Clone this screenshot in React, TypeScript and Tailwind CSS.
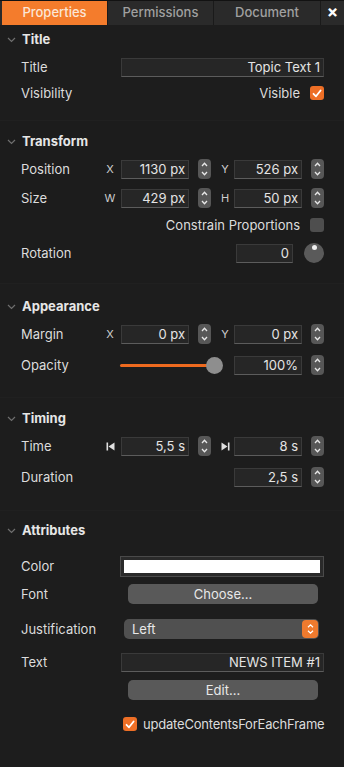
import React from 'react';

const font = { fontFamily: 'Inter, "Noto Sans", sans-serif' };

const Chevron = () => (
  <svg width="9" height="6" viewBox="0 0 9 6" className="mr-[6px]">
    <path d="M1 1 L4.5 4.5 L8 1" stroke="#6f6f6f" strokeWidth="1.2" fill="none" />
  </svg>
);

const Header: React.FC<{ title: string }> = ({ title }) => (
  <div className="h-[24px] flex items-center pl-[7px] pt-[3px]">
    <Chevron />
    <span className="text-[13px] font-bold text-[#e6e6e6]">{title}</span>
  </div>
);

const Stepper: React.FC<{ orange?: boolean }> = ({ orange }) => (
  <div className={`w-[13px] h-[20px] rounded-[4px] flex flex-col items-center justify-between py-[3px] ${orange ? 'bg-[#ee7a2e]' : 'bg-[#575757]'}`}>
    <svg width="7" height="5" viewBox="0 0 7 5">
      <path d="M1 4 L3.5 1.2 L6 4" stroke="#e8e8e8" strokeWidth="1.3" fill="none" />
    </svg>
    <svg width="7" height="5" viewBox="0 0 7 5">
      <path d="M1 1 L3.5 3.8 L6 1" stroke="#e8e8e8" strokeWidth="1.3" fill="none" />
    </svg>
  </div>
);

const Field: React.FC<{ value: string; w: string }> = ({ value, w }) => (
  <div className={`${w} h-[19px] bg-[#262626] border border-[#3a3a3a] border-b-[#5c5c5c] flex items-center justify-end pr-[3px] pt-[1px] text-[13px] text-[#e4e4e4]`}>
    {value}
  </div>
);

const Label: React.FC<{ children: React.ReactNode }> = ({ children }) => (
  <span className="text-[13px] text-[#dcdcdc] pt-[2px]">{children}</span>
);

const Mini: React.FC<{ children: React.ReactNode }> = ({ children }) => (
  <div className="w-[10px] flex justify-center text-[11px] text-[#cfcfcf] pt-[1px]">{children}</div>
);

const Pair: React.FC<{ a: React.ReactNode; b: React.ReactNode; va: string; vb: string }> = ({ a, b, va, vb }) => (
  <div className="flex items-center">
    <Mini>{a}</Mini>
    <div className="ml-[6px]"><Field value={va} w="w-[68px]" /></div>
    <div className="ml-[9px]"><Stepper /></div>
    <div className="ml-[9px]"><Mini>{b}</Mini></div>
    <div className="ml-[4px]"><Field value={vb} w="w-[68px]" /></div>
    <div className="ml-[9px]"><Stepper /></div>
  </div>
);

const Row: React.FC<{ label?: string; className?: string; children?: React.ReactNode }> = ({ label, className, children }) => (
  <div className={`h-[20px] flex items-center pl-[21px] pr-[20px] ${className ?? ''}`}>
    {label && <Label>{label}</Label>}
    <div className="flex-1" />
    {children}
  </div>
);

const Check: React.FC<{ on: boolean }> = ({ on }) =>
  on ? (
    <div className="w-[14px] h-[14px] shrink-0 rounded-[3px] bg-[#ee6f26] flex items-center justify-center">
      <svg width="10" height="9" viewBox="0 0 10 9">
        <path d="M1.5 4.8 L4 7.3 L8.6 1.5" stroke="#fff" strokeWidth="1.8" fill="none" strokeLinecap="round" strokeLinejoin="round" />
      </svg>
    </div>
  ) : (
    <div className="w-[14px] h-[14px] shrink-0 rounded-[3px] bg-[#4e4e4e]" />
  );

const SkipStart = () => (
  <svg width="9" height="9" viewBox="0 0 9 9">
    <rect x="0.5" y="0.5" width="1.6" height="8" fill="#e0e0e0" />
    <path d="M8.5 0.5 L2.5 4.5 L8.5 8.5 Z" fill="#e0e0e0" />
  </svg>
);

const SkipEnd = () => (
  <svg width="9" height="9" viewBox="0 0 9 9">
    <path d="M0.5 0.5 L6.5 4.5 L0.5 8.5 Z" fill="#e0e0e0" />
    <rect x="6.9" y="0.5" width="1.6" height="8" fill="#e0e0e0" />
  </svg>
);

export default function App() {
  return (
    <div className="w-[344px] h-[767px] bg-[#1d1d1d] overflow-hidden" style={font}>
      <div className="h-[25px] flex bg-[#2a2a2a] border-t border-[#121212] pl-[2px]">
        <div className="w-[105px] bg-[#f47c2c] flex items-center justify-center text-[13px] font-medium text-[#fbe6d6]">Properties</div>
        <div className="w-[106px] border-l border-[#1a1a1a] flex items-center justify-center text-[13px] font-medium text-[#a0a0a0]">Permissions</div>
        <div className="w-[107px] border-l border-[#1a1a1a] flex items-center justify-center text-[13px] font-medium text-[#a0a0a0]">Document</div>
        <div className="flex-1 border-l border-[#1a1a1a] flex items-center justify-center text-[17px] font-bold text-white">×</div>
      </div>

      <div className="pt-[1px] pb-[17px]">
        <Header title="Title" />
        <Row label="Title" className="mt-[7px]">
          <Field value="Topic Text 1" w="w-[203px]" />
        </Row>
        <Row label="Visibility" className="mt-[6px]">
          <span className="text-[13px] text-[#dcdcdc] mr-[10px] pt-[2px]">Visible</span>
          <Check on />
        </Row>
      </div>

      <div className="border-t border-[#202020] bg-[#1c1c1c] pt-[7px] pb-[20px]">
        <Header title="Transform" />
        <Row label="Position" className="mt-[7px]">
          <Pair a="X" b="Y" va="1130 px" vb="526 px" />
        </Row>
        <Row label="Size" className="mt-[9px]">
          <Pair a="W" b="H" va="429 px" vb="50 px" />
        </Row>
        <Row className="mt-[7px]">
          <span className="text-[13px] text-[#dcdcdc] mr-[10px] pt-[2px]">Constrain Proportions</span>
          <Check on={false} />
        </Row>
        <Row label="Rotation" className="mt-[8px]">
          <Field value="0" w="w-[57px]" />
          <div className="ml-[11px] w-[20px] h-[20px] rounded-full bg-[#5a5a5a] flex justify-center">
            <div className="mt-[2px] w-[5px] h-[5px] rounded-full bg-[#eeeeee]" />
          </div>
        </Row>
      </div>

      <div className="border-t border-[#202020] pt-[9px] pb-[22px]">
        <Header title="Appearance" />
        <Row label="Margin" className="mt-[7px]">
          <Pair a="X" b="Y" va="0 px" vb="0 px" />
        </Row>
        <Row label="Opacity" className="mt-[11px]">
          <div className="w-[103px] flex items-center">
            <div className="flex-1 h-[3px] rounded-full bg-[#ee6a1f]" />
            <div className="w-[17px] h-[17px] rounded-full bg-[#8e8e8e] -ml-[6px]" />
          </div>
          <div className="ml-[11px]"><Field value="100%" w="w-[68px]" /></div>
          <div className="ml-[9px]"><Stepper /></div>
        </Row>
      </div>

      <div className="border-t border-[#202020] pt-[7px] pb-[23px]">
        <Header title="Timing" />
        <Row label="Time" className="mt-[7px]">
          <Pair a={<SkipStart />} b={<SkipEnd />} va="5,5 s" vb="8 s" />
        </Row>
        <Row label="Duration" className="mt-[11px]">
          <Field value="2,5 s" w="w-[68px]" />
          <div className="ml-[9px]"><Stepper /></div>
        </Row>
      </div>

      <div className="border-t border-[#202020] pt-[6px]">
        <Header title="Attributes" />
        <Row label="Color" className="mt-[15px]">
          <div className="w-[204px] h-[21px] border border-[#4a4a4a] bg-[#2a2a2a] p-[3px]">
            <div className="w-full h-full bg-white" />
          </div>
        </Row>
        <Row label="Font" className="mt-[8px] pr-[26px]">
          <div className="w-[190px] h-[20px] rounded-[5px] bg-[#595959] flex items-center justify-center pt-[1px] text-[13px] text-[#e8e8e8]">Choose...</div>
        </Row>
        <Row label="Justification" className="mt-[15px] pr-[25px]">
          <div className="w-[195px] h-[20px] rounded-[5px] bg-[#505050] flex items-center pl-[8px] pr-[1px] text-[13px] text-[#e8e8e8]">
            <span className="flex-1 pt-[1px]">Left</span>
            <div className="w-[16px] h-[18px] rounded-[4px] bg-[#ee7a2e] flex flex-col items-center justify-center gap-[2px]">
              <svg width="7" height="4" viewBox="0 0 7 4"><path d="M1 3.3 L3.5 0.9 L6 3.3" stroke="#fff" strokeWidth="1.2" fill="none" /></svg>
              <svg width="7" height="4" viewBox="0 0 7 4"><path d="M1 0.7 L3.5 3.1 L6 0.7" stroke="#fff" strokeWidth="1.2" fill="none" /></svg>
            </div>
          </div>
        </Row>
        <Row label="Text" className="mt-[13px]">
          <Field value="NEWS ITEM #1" w="w-[203px]" />
        </Row>
        <Row className="mt-[8px] pr-[26px]">
          <div className="w-[190px] h-[20px] rounded-[5px] bg-[#595959] flex items-center justify-center pt-[1px] text-[13px] text-[#e8e8e8]">Edit...</div>
        </Row>
        <div className="mt-[14px] h-[20px] flex items-center pl-[123px] whitespace-nowrap">
          <Check on />
          <span className="ml-[6px] pt-[2px] text-[13px] tracking-[-0.2px] text-[#dcdcdc]">updateContentsForEachFrame</span>
        </div>
      </div>
    </div>
  );
}
